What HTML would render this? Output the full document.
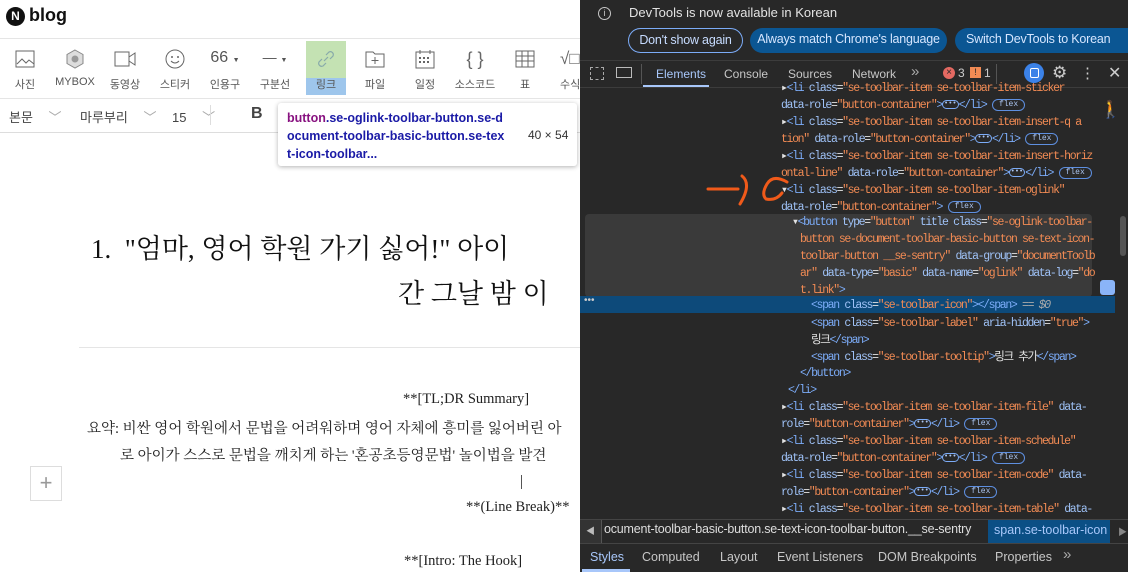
<!DOCTYPE html>
<html><head><meta charset="utf-8"><style>
*{margin:0;padding:0;box-sizing:border-box}
body{width:1128px;height:572px;overflow:hidden;position:relative;background:#fff;font-family:"Liberation Sans","Noto Sans CJK KR",sans-serif}
.a{position:absolute;white-space:nowrap}
.tb{position:absolute;top:49px;width:50px;text-align:center;font-size:11px;color:#555}
.tb svg{display:block;margin:0 auto 7px;height:20px}
.tb .ic{height:27px}
#dt{position:absolute;left:580px;top:0;width:548px;height:572px;background:#282828;color:#e3e3e3;overflow:hidden}
.code{position:absolute;font-family:"Liberation Mono","Noto Sans CJK KR",monospace;font-size:11.5px;letter-spacing:-1.35px;line-height:17px;white-space:nowrap}
.t{color:#7cacf8}.n{color:#9fc2f7}.v{color:#f28b54}.w{color:#e3e3e3}
.f{display:inline-block;border:1px solid #5e8fe0;border-radius:8px;font-size:8px;line-height:10px;padding:0 6px;color:#aac4f0;vertical-align:middle;letter-spacing:0}
.d{display:inline-block;border:1px solid #7cacf8;border-radius:5px;font-size:7px;line-height:7px;padding:0 1px;color:#aac4f0;vertical-align:middle;letter-spacing:0}
.btn{position:absolute;top:28px;height:25px;border-radius:13px;font-size:12.5px;letter-spacing:-0.2px;line-height:23px;text-align:center;color:#c7dcff;overflow:hidden}
</style></head><body>
<div class="a" style="left:6px;top:7px;width:19px;height:19px;border-radius:50%;background:#111;color:#fff;font-weight:bold;font-size:12px;text-align:center;line-height:19px">N</div>
<div class="a" style="left:29px;top:5px;font-size:18px;font-weight:bold;color:#111">blog</div>
<div class="a" style="left:0;top:38px;width:580px;border-top:1px solid #e5e5e5"></div>
<div class="a" style="left:306px;top:41px;width:40px;height:37px;background:#c4e2b3"></div>
<div class="a" style="left:306px;top:78px;width:40px;height:17px;background:#9ec6ec"></div>
<div class="tb" style="left:0"><svg width="20" viewBox="0 0 20 20"><rect x="1" y="2" width="18" height="16" fill="none" stroke="#666"/><path d="M2 15l5-5 4 4 3-3 5 4" fill="none" stroke="#666"/></svg>사진</div>
<div class="tb" style="left:50px"><svg width="20" viewBox="0 0 20 20"><path d="M10 1l8 4.5v9L10 19l-8-4.5v-9z" fill="#ddd" stroke="#888"/><circle cx="10" cy="10" r="3.5" fill="#999"/></svg>MYBOX</div>
<div class="tb" style="left:100px"><svg width="22" viewBox="0 0 22 20"><rect x="1" y="3" width="14" height="14" fill="none" stroke="#666"/><path d="M15 8l6-4v12l-6-4" fill="none" stroke="#666"/></svg>동영상</div>
<div class="tb" style="left:150px"><svg width="20" viewBox="0 0 20 20"><circle cx="10" cy="10" r="9" fill="none" stroke="#666"/><circle cx="7" cy="8" r="1" fill="#666"/><circle cx="13" cy="8" r="1" fill="#666"/><path d="M6 12q4 4 8 0" fill="none" stroke="#666"/></svg>스티커</div>
<div class="tb" style="left:200px"><div class="ic" style="font-size:16px;color:#555">66 <span style="font-size:7px">▼</span></div>인용구</div>
<div class="tb" style="left:250px"><div class="ic" style="font-size:14px;color:#555">— <span style="font-size:7px">▼</span></div>구분선</div>
<div class="tb" style="left:301px"><svg width="20" viewBox="0 0 20 20"><path d="M8 12l4-4M6 10l-3 3a3 3 0 0 0 4 4l3-3M14 10l3-3a3 3 0 0 0-4-4l-3 3" fill="none" stroke="#8aa" stroke-width="1.2"/></svg>링크</div>
<div class="tb" style="left:350px"><svg width="20" viewBox="0 0 20 20"><path d="M1 3h7l2 2h9v13H1z" fill="none" stroke="#666"/><path d="M10 8v7M6.5 11.5h7" stroke="#666"/></svg>파일</div>
<div class="tb" style="left:400px"><svg width="20" viewBox="0 0 20 20"><rect x="1" y="3" width="18" height="16" fill="none" stroke="#666"/><path d="M5 1v4M15 1v4" stroke="#666"/><g fill="#666"><rect x="4" y="8" width="2" height="2"/><rect x="8" y="8" width="2" height="2"/><rect x="12" y="8" width="2" height="2"/><rect x="4" y="12" width="2" height="2"/><rect x="8" y="12" width="2" height="2"/><rect x="12" y="12" width="2" height="2"/></g></svg>일정</div>
<div class="tb" style="left:450px"><div class="ic" style="font-size:18px;color:#666">{ }</div>소스코드</div>
<div class="tb" style="left:500px"><svg width="20" viewBox="0 0 20 20"><path d="M1 2h18v16H1zM1 7h18M1 12h18M7 2v16M13 2v16" fill="none" stroke="#666"/></svg>표</div>
<div class="tb" style="left:560px;text-align:left"><div class="ic" style="font-size:17px;color:#666">√□</div>수식</div>
<div class="a" style="left:0;top:98px;width:580px;border-top:1px solid #e5e5e5"></div>
<div class="a" style="left:0;top:132px;width:580px;border-top:1px solid #ddd"></div>
<div class="a" style="left:9px;top:107px;font-size:13px;color:#444">본문 <span style="color:#aaa;margin-left:12px">﹀</span></div>
<div class="a" style="left:80px;top:107px;font-size:13px;color:#444">마루부리 <span style="color:#aaa;margin-left:12px">﹀</span></div>
<div class="a" style="left:172px;top:107px;font-size:13px;color:#444">15 <span style="color:#aaa;margin-left:12px">﹀</span></div>
<div class="a" style="left:210px;top:105px;height:20px;border-left:1px solid #ddd"></div>
<div class="a" style="left:251px;top:105px;font-size:16px;font-weight:bold;color:#444">B</div>
<div class="a" style="left:278px;top:103px;width:299px;height:63px;background:#fff;box-shadow:0 1px 5px rgba(0,0,0,.3);border-radius:3px"></div>
<div class="a" style="left:287px;top:109px;font-size:12.5px;line-height:18px;font-weight:bold;color:#1a1aa6;white-space:normal;word-break:break-all;width:220px"><span style="color:#881280">button</span>.se-oglink-toolbar-button.se-document-toolbar-basic-button.se-text-icon-toolbar...</div>
<div class="a" style="left:528px;top:128px;font-size:12px;color:#333">40 × 54</div>
<div class="a" style="left:0;top:227px;width:580px;font-family:'Liberation Serif','Noto Serif CJK SC',serif;font-size:27px;color:#111">
<div class="a" style="left:91px;top:0">1.&nbsp; "엄마, 영어 학원 가기 싫어!" 아이</div>
<div class="a" style="left:398px;top:45px">간 그날 밤 이</div></div>
<div class="a" style="left:79px;top:347px;width:501px;border-top:1px solid #e5e5e5"></div>
<div class="a" style="font-family:'Liberation Serif','Noto Serif CJK SC',serif;font-size:14.5px;color:#222;left:0;top:0">
<div class="a" style="left:403px;top:391px">**[TL;DR Summary]</div>
<div class="a" style="left:87px;top:417px">요약: 비싼 영어 학원에서 문법을 어려워하며 영어 자체에 흥미를 잃어버린 아</div>
<div class="a" style="left:120px;top:444px">로 아이가 스스로 문법을 깨치게 하는 '혼공초등영문법' 놀이법을 발견</div>
<div class="a" style="left:466px;top:499px">**(Line Break)**</div>
<div class="a" style="left:404px;top:553px">**[Intro: The Hook]</div></div>
<div class="a" style="left:521px;top:475px;height:14px;border-left:1px solid #555"></div>
<div class="a" style="left:30px;top:466px;width:32px;height:35px;border:1px solid #ddd;color:#999;font-size:22px;text-align:center;line-height:32px;font-weight:200">+</div>

<div id="dt">
<div class="a" style="left:18px;top:7px;width:13px;height:13px;border:1.5px solid #c7c7c7;border-radius:50%;font-size:9px;text-align:center;line-height:10px;color:#ccc">i</div>
<div class="a" style="left:49px;top:5px;font-size:13px;color:#e3e3e3">DevTools is now available in Korean</div>
<div class="btn" style="left:48px;width:115px;border:1px solid #7cacf8">Don't show again</div>
<div class="btn" style="left:170px;width:197px;background:#0b5693;color:#d6e6ff">Always match Chrome's language</div>
<div class="btn" style="left:375px;width:200px;background:#0b5693;color:#d6e6ff;text-align:left;padding-left:11px">Switch DevTools to Korean</div>
<div class="a" style="left:0;top:60px;width:548px;height:28px;border-top:1px solid #3c3c3c;border-bottom:1px solid #3c3c3c"></div>
<div class="a" style="left:10px;top:67px;width:14px;height:13px;border:1px dashed #aaa"></div>
<div class="a" style="left:36px;top:67px;width:16px;height:11px;border:1.5px solid #bbb"></div>
<div class="a" style="left:61px;top:64px;height:20px;border-left:1px solid #555"></div>
<div class="a" style="left:76px;top:67px;font-size:12px;color:#a8c7fa">Elements</div>
<div class="a" style="left:63px;top:85px;width:66px;height:2px;background:#a8c7fa"></div>
<div class="a" style="left:144px;top:67px;font-size:12px;color:#c7c7c7">Console</div>
<div class="a" style="left:208px;top:67px;font-size:12px;color:#c7c7c7">Sources</div>
<div class="a" style="left:272px;top:67px;font-size:12px;color:#c7c7c7">Network</div>
<div class="a" style="left:331px;top:63px;font-size:15px;color:#aaa">»</div>
<div class="a" style="left:363px;top:67px;width:12px;height:12px;border-radius:50%;background:#e46962;color:#282828;font-size:10px;line-height:12px;text-align:center">×</div>
<div class="a" style="left:378px;top:66px;font-size:12px;color:#ccc">3</div>
<div class="a" style="left:390px;top:67px;width:11px;height:11px;background:#f28b54;color:#282828;font-size:9px;line-height:11px;text-align:center">!</div>
<div class="a" style="left:404px;top:66px;font-size:12px;color:#ccc">1</div>
<div class="a" style="left:416px;top:64px;height:20px;border-left:1px solid #555"></div>
<div class="a" style="left:444px;top:63px;width:20px;height:20px;border-radius:50%;background:#3b82e8"></div>
<div class="a" style="left:450px;top:68px;width:9px;height:10px;border:1.5px solid #fff;border-radius:2px"></div>
<div class="a" style="left:472px;top:63px;font-size:17px;color:#ccc">⚙</div>
<div class="a" style="left:500px;top:64px;font-size:15px;color:#ccc">⋮</div>
<div class="a" style="left:528px;top:63px;font-size:16px;color:#ccc">✕</div>
<div class="a" style="left:5px;top:214px;width:507px;height:83px;background:#3a3a3a;border-radius:4px"></div>
<div class="a" style="left:0;top:296px;width:535px;height:17px;background:#0d4a7a"></div>
<div class="a" style="left:4px;top:295px;font-size:10px;color:#ccc">•••</div>
<div class="a" style="left:520px;top:100px;font-size:17px;color:#ccc">🚶</div>
<div class="a" style="left:520px;top:280px;width:15px;height:15px;border-radius:3px;background:#8ab4f8"></div>
<div class="a" style="left:540px;top:216px;width:6px;height:40px;background:#555;border-radius:3px"></div>
<div class="code" style="left:201px;top:80px">
<div>▸<span class="t">&lt;li</span> <span class="n">class</span>=<span class="v">"se-toolbar-item se-toolbar-item-sticker</span></div>
<div><span class="n">data-role</span>=<span class="v">"button-container"</span><span class="t">&gt;</span><span class="d">•••</span><span class="t">&lt;/li&gt;</span> <span class="f">flex</span></div>
<div>▸<span class="t">&lt;li</span> <span class="n">class</span>=<span class="v">"se-toolbar-item se-toolbar-item-insert-q a</span></div>
<div><span class="v">tion"</span> <span class="n">data-role</span>=<span class="v">"button-container"</span><span class="t">&gt;</span><span class="d">•••</span><span class="t">&lt;/li&gt;</span> <span class="f">flex</span></div>
<div>▸<span class="t">&lt;li</span> <span class="n">class</span>=<span class="v">"se-toolbar-item se-toolbar-item-insert-horiz</span></div>
<div><span class="v">ontal-line"</span> <span class="n">data-role</span>=<span class="v">"button-container"</span><span class="t">&gt;</span><span class="d">•••</span><span class="t">&lt;/li&gt;</span> <span class="f">flex</span></div>
<div>▾<span class="t">&lt;li</span> <span class="n">class</span>=<span class="v">"se-toolbar-item se-toolbar-item-oglink"</span></div>
<div><span class="n">data-role</span>=<span class="v">"button-container"</span><span class="t">&gt;</span> <span class="f">flex</span></div>
</div>
<div class="code" style="left:212px;top:214px">
<div>▾<span class="t">&lt;button</span> <span class="n">type</span>=<span class="v">"button"</span> <span class="n">title class</span>=<span class="v">"se-oglink-toolbar-</span></div>
<div style="padding-left:8px"><span class="v">button se-document-toolbar-basic-button se-text-icon-</span></div>
<div style="padding-left:8px"><span class="v">toolbar-button __se-sentry"</span> <span class="n">data-group</span>=<span class="v">"documentToolb</span></div>
<div style="padding-left:8px"><span class="v">ar"</span> <span class="n">data-type</span>=<span class="v">"basic"</span> <span class="n">data-name</span>=<span class="v">"oglink"</span> <span class="n">data-log</span>=<span class="v">"do</span></div>
<div style="padding-left:8px"><span class="v">t.link"</span><span class="t">&gt;</span></div>
</div>
<div class="code" style="left:231px;top:297px">
<div><span class="t">&lt;span</span> <span class="n">class</span>=<span class="v">"se-toolbar-icon"</span><span class="t">&gt;&lt;/span&gt;</span> <span style="color:#aaa;font-style:italic">== $0</span></div>
<div style="margin-top:1px"><span class="t">&lt;span</span> <span class="n">class</span>=<span class="v">"se-toolbar-label"</span> <span class="n">aria-hidden</span>=<span class="v">"true"</span><span class="t">&gt;</span></div>
<div><span class="w">링크</span><span class="t">&lt;/span&gt;</span></div>
<div><span class="t">&lt;span</span> <span class="n">class</span>=<span class="v">"se-toolbar-tooltip"</span><span class="t">&gt;</span><span class="w">링크 추가</span><span class="t">&lt;/span&gt;</span></div>
</div>
<div class="code" style="left:220px;top:365px"><span class="t">&lt;/button&gt;</span></div>
<div class="code" style="left:208px;top:382px"><span class="t">&lt;/li&gt;</span></div>
<div class="code" style="left:201px;top:399px">
<div>▸<span class="t">&lt;li</span> <span class="n">class</span>=<span class="v">"se-toolbar-item se-toolbar-item-file"</span> <span class="n">data-</span></div>
<div><span class="n">role</span>=<span class="v">"button-container"</span><span class="t">&gt;</span><span class="d">•••</span><span class="t">&lt;/li&gt;</span> <span class="f">flex</span></div>
<div>▸<span class="t">&lt;li</span> <span class="n">class</span>=<span class="v">"se-toolbar-item se-toolbar-item-schedule"</span></div>
<div><span class="n">data-role</span>=<span class="v">"button-container"</span><span class="t">&gt;</span><span class="d">•••</span><span class="t">&lt;/li&gt;</span> <span class="f">flex</span></div>
<div>▸<span class="t">&lt;li</span> <span class="n">class</span>=<span class="v">"se-toolbar-item se-toolbar-item-code"</span> <span class="n">data-</span></div>
<div><span class="n">role</span>=<span class="v">"button-container"</span><span class="t">&gt;</span><span class="d">•••</span><span class="t">&lt;/li&gt;</span> <span class="f">flex</span></div>
<div>▸<span class="t">&lt;li</span> <span class="n">class</span>=<span class="v">"se-toolbar-item se-toolbar-item-table"</span> <span class="n">data-</span></div>
</div>
<svg class="a" style="left:125px;top:170px" width="90" height="40" viewBox="0 0 90 40"><path d="M3 19h30M37 6q10 8 -2 28M82 12q-14-8-20 2t-1 15q10 2 16-6" fill="none" stroke="#f05a1a" stroke-width="3" stroke-linecap="round"/></svg>
<div class="a" style="left:0;top:519px;width:548px;height:25px;background:#282828;border-top:1px solid #444;border-bottom:1px solid #444"></div>
<div class="a" style="left:0;top:520px;width:22px;height:23px;background:#333;border-right:1px solid #555;color:#bbb;font-size:9px;line-height:23px;text-align:center">◀</div>
<div class="a" style="left:24px;top:522px;font-size:12.5px;color:#ddd;letter-spacing:-0.2px">ocument-toolbar-basic-button.se-text-icon-toolbar-button.__se-sentry</div>
<div class="a" style="left:408px;top:520px;width:122px;height:23px;background:#0b4f85;color:#a8c7fa;font-size:12.5px;line-height:21px;padding-left:6px">span.se-toolbar-icon</div>
<div class="a" style="left:538px;top:525px;font-size:9px;color:#888">▶</div>
<div class="a" style="left:10px;top:550px;font-size:12.5px;color:#a8c7fa">Styles</div>
<div class="a" style="left:2px;top:569px;width:48px;height:3px;background:#a8c7fa"></div>
<div class="a" style="left:62px;top:550px;font-size:12.5px;color:#c7c7c7">Computed</div>
<div class="a" style="left:140px;top:550px;font-size:12.5px;color:#c7c7c7">Layout</div>
<div class="a" style="left:197px;top:550px;font-size:12.5px;color:#c7c7c7">Event Listeners</div>
<div class="a" style="left:298px;top:550px;font-size:12.5px;color:#c7c7c7">DOM Breakpoints</div>
<div class="a" style="left:415px;top:550px;font-size:12.5px;color:#c7c7c7">Properties</div>
<div class="a" style="left:483px;top:546px;font-size:15px;color:#aaa">»</div>
</div>
</body></html>
